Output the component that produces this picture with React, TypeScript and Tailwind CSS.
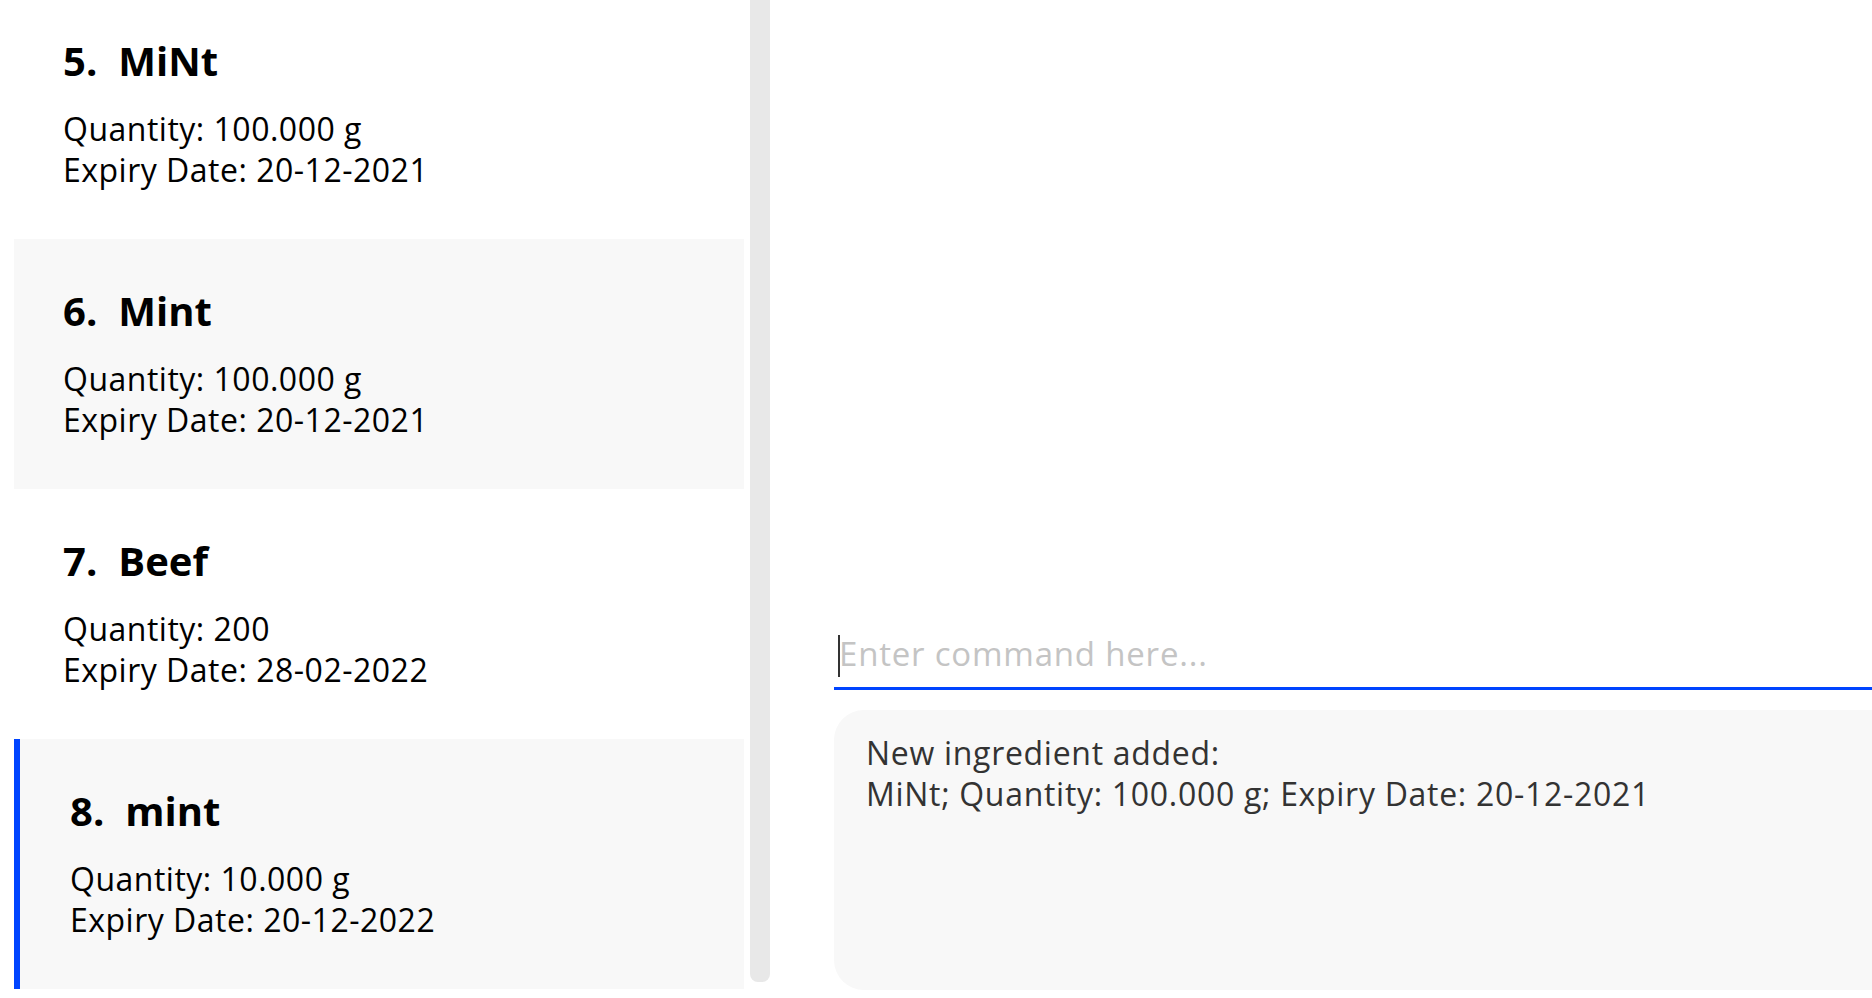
const ingredients = [
  { index: 5, name: "MiNt", quantity: "100.000 g", expiry: "20-12-2021", selected: false },
  { index: 6, name: "Mint", quantity: "100.000 g", expiry: "20-12-2021", selected: false },
  { index: 7, name: "Beef", quantity: "200", expiry: "28-02-2022", selected: false },
  { index: 8, name: "mint", quantity: "10.000 g", expiry: "20-12-2022", selected: true },
]

function IngredientCard({ item }: { item: (typeof ingredients)[number] }) {
  const shaded = item.index % 2 === 0
  return (
    <div
      className={`h-[250px] pt-[52px] ${shaded ? "bg-[#f8f8f8]" : "bg-white"} ${
        item.selected ? "border-l-[6px] border-[#0044ff] pl-[50px]" : "pl-[49px]"
      }`}
    >
      <div className="flex h-[40px] items-center text-[40px] font-bold leading-[40px] text-black">
        <span>{item.index}.</span>
        <span className="ml-[21px]">{item.name}</span>
      </div>
      <div className="mt-[27px] text-[32px] leading-[41px] tracking-[0.5px] text-black">
        <div>Quantity: {item.quantity}</div>
        <div>Expiry Date: {item.expiry}</div>
      </div>
    </div>
  )
}

export default function App() {
  return (
    <div className="flex h-[998px] w-[1872px] overflow-hidden bg-white font-['Open_Sans','Liberation_Sans',sans-serif]">
      {/* Ingredient list */}
      <div className="flex w-[770px] shrink-0">
        <div className="ml-[14px] h-[998px] w-[730px] overflow-hidden">
          <div className="-mt-[11px]">
            {ingredients.map((item) => (
              <IngredientCard key={item.index} item={item} />
            ))}
          </div>
        </div>
        <div className="ml-[6px] h-[982px] w-[20px] rounded-b-[8px] bg-[#e8e8e8]" />
      </div>

      {/* Command box + result */}
      <div className="ml-[64px] flex w-[1100px] shrink-0 flex-col justify-end pb-[8px]">
        <div className="border-b-[3px] border-[#0044ff] pb-[13px] pl-[4px]">
          <div className="flex h-[40px] items-start">
            <div className="mt-[1px] h-[42px] w-[2px] shrink-0 bg-[#333]" />
            <span className="-ml-[1px] text-[33px] leading-[40px] tracking-[0.8px] text-[#c4c4c4]">
              Enter command here...
            </span>
          </div>
        </div>
        <div className="mt-[20px] h-[280px] rounded-[30px] bg-[#f8f8f8] pl-[32px] pt-[22px] text-[32px] leading-[41px] tracking-[0.7px] text-[#333]">
          <div>New ingredient added:</div>
          <div>MiNt; Quantity: 100.000 g; Expiry Date: 20-12-2021</div>
        </div>
      </div>
    </div>
  )
}
